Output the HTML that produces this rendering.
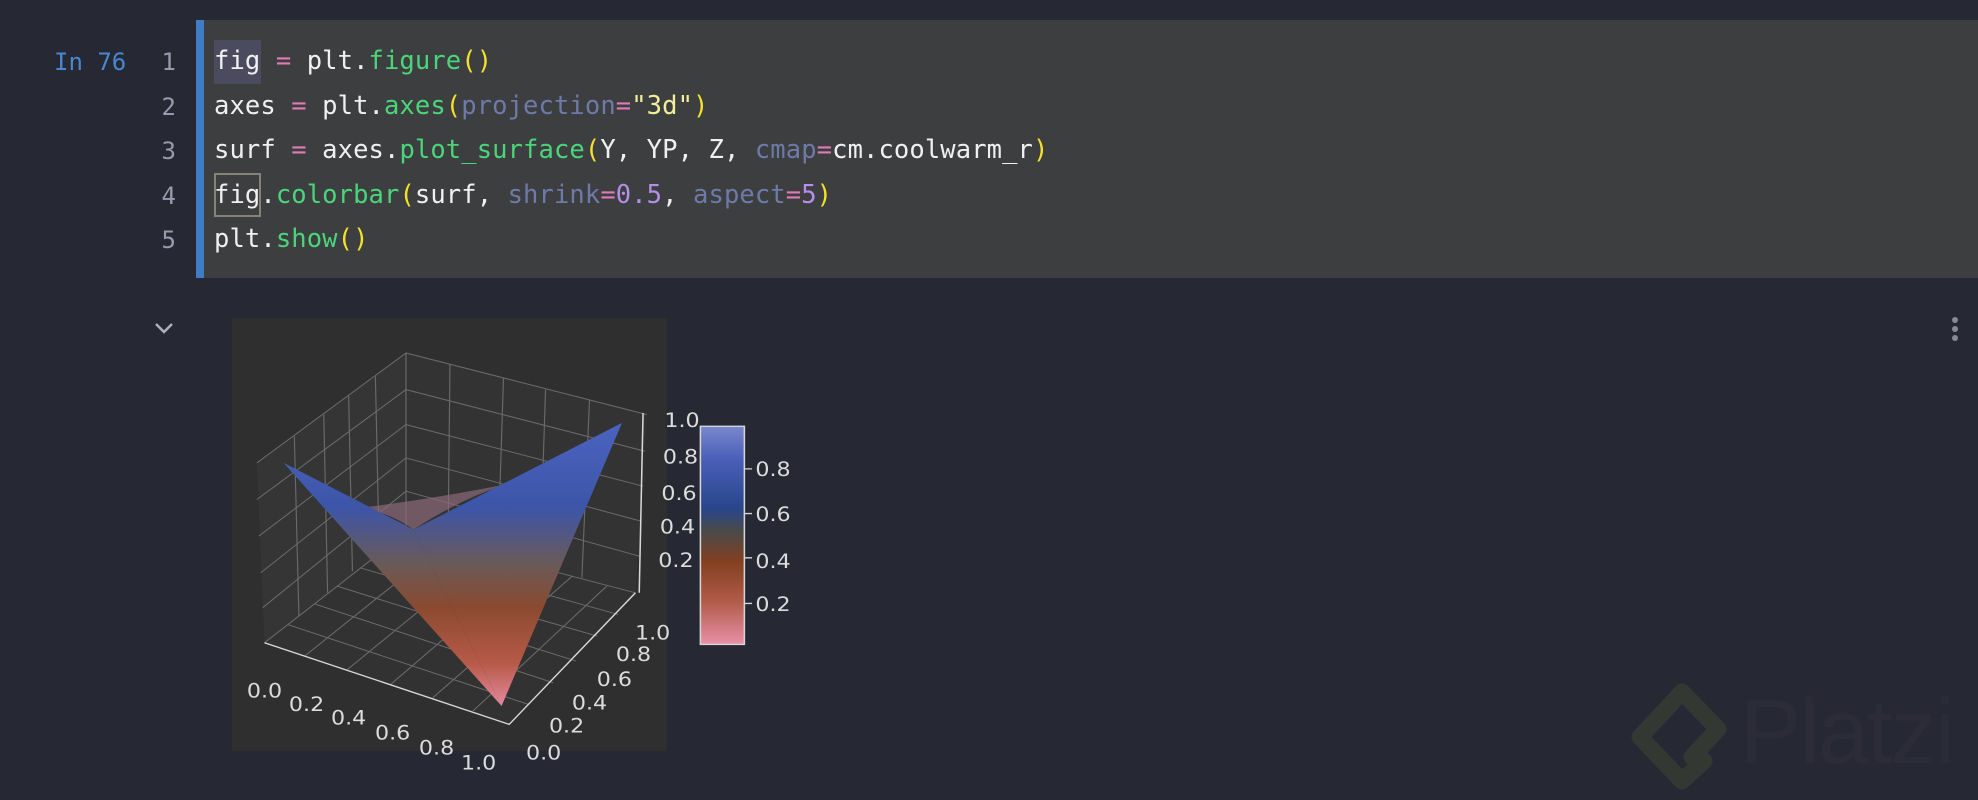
<!DOCTYPE html>
<html><head><meta charset="utf-8"><style>
*{margin:0;padding:0;box-sizing:border-box}
body{width:1978px;height:800px;background:#262833;position:relative;overflow:hidden;font-family:"DejaVu Sans Mono","Liberation Mono",monospace}
.cell{position:absolute;left:196px;top:20px;width:1782px;height:258px;background:#3d3e40;border-left:8px solid #3f7ec4}
.ln{position:absolute;font-size:24px;color:#9a9aae;width:30px;text-align:right;left:146px}
.code{position:absolute;left:214px;font-size:25.5px;color:#f0f0f0;white-space:pre;letter-spacing:0.1px}
.in{position:absolute;left:54px;top:48px;font-size:24px;color:#4a86cf}
.g{color:#4bd57a}.y{color:#f4e22a}.p{color:#e07bb8}.k{color:#6e7aa8}.s{color:#f2ef9a}.n{color:#b48ee8}
</style></head><body>
<div class="cell"></div>
<div class="in">In 76</div>
<div class="ln" style="top:48px">1</div>
<div class="ln" style="top:93px">2</div>
<div class="ln" style="top:137px">3</div>
<div class="ln" style="top:182px">4</div>
<div class="ln" style="top:226px">5</div>
<div style="position:absolute;left:214px;top:40px;width:47px;height:44px;background:#4a4b5e"></div>
<div style="position:absolute;left:214px;top:173px;width:47px;height:44px;border:2px solid #86827a"></div>
<div class="code" style="top:46px">fig <span class="p">=</span> plt.<span class="g">figure</span><span class="y">()</span></div>
<div class="code" style="top:91px">axes <span class="p">=</span> plt.<span class="g">axes</span><span class="y">(</span><span class="k">projection</span><span class="p">=</span><span class="s">"3d"</span><span class="y">)</span></div>
<div class="code" style="top:135px">surf <span class="p">=</span> axes.<span class="g">plot_surface</span><span class="y">(</span>Y, YP, Z, <span class="k">cmap</span><span class="p">=</span>cm.coolwarm_r<span class="y">)</span></div>
<div class="code" style="top:180px">fig.<span class="g">colorbar</span><span class="y">(</span>surf, <span class="k">shrink</span><span class="p">=</span><span class="n">0.5</span>, <span class="k">aspect</span><span class="p">=</span><span class="n">5</span><span class="y">)</span></div>
<div class="code" style="top:224px">plt.<span class="g">show</span><span class="y">()</span></div>

<svg style="position:absolute;left:154px;top:322px" width="20" height="12" viewBox="0 0 20 12"><path d="M2 2 L10 10 L18 2" fill="none" stroke="#b0b0bc" stroke-width="2.5"/></svg>
<div style="position:absolute;left:1952px;top:317px;width:6px;height:6px;border-radius:3px;background:#8a8a96;box-shadow:0 9px 0 #8a8a96,0 18px 0 #8a8a96"></div>

<svg style="position:absolute;left:232px;top:318px" width="564" height="458" viewBox="85 55 1475 1375" preserveAspectRatio="none" font-family="DejaVu Sans,Liberation Sans,sans-serif">
<defs>
<linearGradient id="sg" x1="0" y1="370" x2="0" y2="1220" gradientUnits="userSpaceOnUse">
<stop offset="0" stop-color="#4a63c0"/><stop offset="0.3" stop-color="#3d55a8"/><stop offset="0.5" stop-color="#6a5a58"/><stop offset="0.65" stop-color="#8a4a30"/><stop offset="0.85" stop-color="#b85a48"/><stop offset="1" stop-color="#e48aa0"/></linearGradient>
<linearGradient id="cb" x1="0" y1="380" x2="0" y2="1035" gradientUnits="userSpaceOnUse">
<stop offset="0" stop-color="#7a88cc"/><stop offset="0.15" stop-color="#4a5fb8"/><stop offset="0.38" stop-color="#28468a"/><stop offset="0.48" stop-color="#4a4a4a"/><stop offset="0.62" stop-color="#824020"/><stop offset="0.8" stop-color="#b05a48"/><stop offset="1" stop-color="#e890a8"/></linearGradient>
</defs>
<rect x="85" y="55" width="1137" height="1300" fill="#2f2f2f"/>
<polygon points="170,1030 150,490 540,160 540,700" fill="#353535"/>
<polygon points="540,700 540,160 1170,345 1140,880" fill="#333333"/>
<polygon points="170,1030 540,700 1140,880 810,1275" fill="#323232"/>
<g stroke="#6a6a6a" stroke-width="3" fill="none">
<path d="M150,490 L540,160 L1170,345 M540,160 L540,700 M170,1030 L540,700 L1140,880"/>
<path d="M150,600 L540,270 L1165,455 M155,710 L540,375 L1160,560 M160,820 L540,475 L1155,665 M165,925 L540,575 L1150,770"/>
<path d="M248,410 L260,950 M325,345 L335,880 M390,290 L400,815 M460,230 L470,760 M655,195 L650,730 M795,235 L780,770 M905,270 L890,800 M1020,300 L1000,835"/>
<path d="M275,1070 L650,725 M385,1112 L760,760 M500,1155 L865,795 M610,1195 L975,830 M715,1235 L1065,860"/>
<path d="M230,975 L860,1215 M300,913 L925,1150 M360,860 L985,1085 M420,805 L1040,1010 M480,750 L1095,945"/>
</g>
<path d="M420,625 Q500,640 560,690 Q680,600 800,555 Q600,600 420,625Z" fill="#8a6a78" opacity="0.7"/>
<polygon points="220,490 560,690 790,1220" fill="url(#sg)"/>
<polygon points="560,690 1105,370 790,1220" fill="url(#sg)"/>
<g stroke="#d8d8d8" stroke-width="4" fill="none">
<path d="M170,1030 L810,1275 L1140,880 M1160,340 L1150,880"/>
</g>
<g fill="#dcdcdc" font-size="58" text-anchor="middle">
<text x="170" y="1195">0.0</text><text x="280" y="1235">0.2</text><text x="390" y="1275">0.4</text><text x="505" y="1320">0.6</text><text x="620" y="1365">0.8</text><text x="730" y="1410">1.0</text>
<text x="900" y="1380">0.0</text><text x="960" y="1300">0.2</text><text x="1020" y="1230">0.4</text><text x="1085" y="1160">0.6</text><text x="1135" y="1085">0.8</text><text x="1185" y="1020">1.0</text>
<text x="1262" y="382">1.0</text><text x="1258" y="492">0.8</text><text x="1254" y="602">0.6</text><text x="1250" y="702">0.4</text><text x="1246" y="802">0.2</text>
<text x="1500" y="530">0.8</text><text x="1500" y="665">0.6</text><text x="1500" y="805">0.4</text><text x="1500" y="935">0.2</text>
</g>
<rect x="1310" y="380" width="115" height="655" fill="url(#cb)" stroke="#d8d8d8" stroke-width="4"/>
<g stroke="#d8d8d8" stroke-width="4"><path d="M1425,508 L1445,508 M1425,642 L1445,642 M1425,775 L1445,775 M1425,912 L1445,912"/></g>
</svg>

<svg style="position:absolute;left:1620px;top:675px" width="110" height="125" viewBox="0 0 110 125"><path d="M84,86 L62,106 L20,62 L62,17 L98,54 L72,82" fill="none" stroke="#333833" stroke-width="17" stroke-linejoin="round" stroke-linecap="round"/></svg>
<div style="position:absolute;left:1740px;top:680px;font-family:'Liberation Sans',sans-serif;font-size:92px;color:#2c2c38;letter-spacing:-2px">Platzi</div>
</body></html>
